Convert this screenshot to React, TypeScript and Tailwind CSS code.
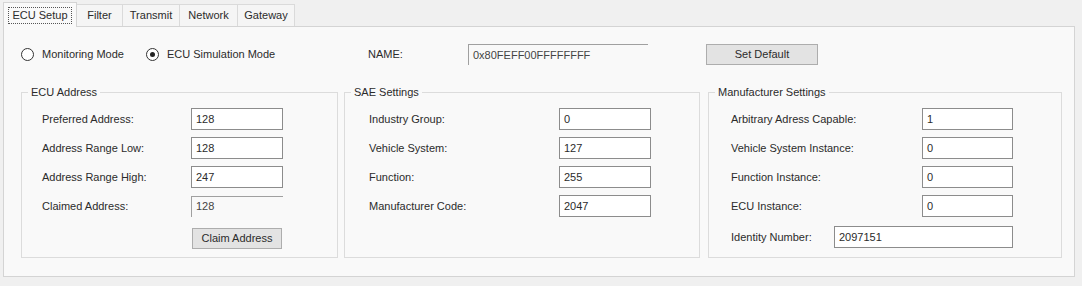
import type { ReactNode } from 'react'

const tabs = ['ECU Setup', 'Filter', 'Transmit', 'Network', 'Gateway']
const tabWidths = [74, 46, 57, 58, 57]

function TextBox({ value, width, readOnly }: { value: string; width: number; readOnly?: boolean }) {
  return (
    <div
      className={
        readOnly
          ? 'h-[21px] border-t border-l border-[#a0a0a0] flex items-center pl-[4px] text-[#444]'
          : 'h-[22px] border border-[#8c8c8c] bg-white flex items-center pl-[4px]'
      }
      style={{ width }}
    >
      {value}
    </div>
  )
}

function Button({ children, width }: { children: ReactNode; width: number }) {
  return (
    <div
      className="h-[21px] border border-[#adadad] bg-[#e3e3e3] flex items-center justify-center"
      style={{ width }}
    >
      {children}
    </div>
  )
}

function Radio({ checked, label }: { checked?: boolean; label: string }) {
  return (
    <div className="flex items-center">
      <span className="w-[13px] h-[13px] rounded-full border border-[#333] bg-white flex items-center justify-center">
        {checked && <span className="w-[5px] h-[5px] rounded-full bg-[#222]" />}
      </span>
      <span className="ml-[8px]">{label}</span>
    </div>
  )
}

function Group({ title, width, padLeft, children }: { title: string; width: number; padLeft: number; children: ReactNode }) {
  return (
    <fieldset
      className="h-[172px] border border-[#dcdcdc] pt-[9px] pr-[8px] pb-[7px]"
      style={{ width, paddingLeft: padLeft }}
    >
      <legend className="px-[3px] leading-[13px]" style={{ marginLeft: 6 - padLeft }}>
        {title}
      </legend>
      {children}
    </fieldset>
  )
}

function Row({ label, value, labelWidth, boxWidth, readOnly }: { label: string; value: string; labelWidth: number; boxWidth: number; readOnly?: boolean }) {
  return (
    <div className="flex items-center h-[22px]">
      <div style={{ width: labelWidth }}>{label}</div>
      <TextBox value={value} width={boxWidth} readOnly={readOnly} />
    </div>
  )
}

export default function App() {
  return (
    <div className="w-[1082px] h-[286px] bg-[#f0f0f0] text-[11px] text-[#2b2b2b] font-['Liberation_Sans',Arial,sans-serif] overflow-hidden">
      {/* tab strip */}
      <div className="h-[26px] flex items-end pl-[3px]">
        {tabs.map((t, i) =>
          i === 0 ? (
            <div
              key={t}
              className="h-[25px] border border-b-0 border-[#d4d4d4] bg-[#f9f9f9] flex items-center justify-center relative z-10 mb-[-1px]"
              style={{ width: tabWidths[i] }}
            >
              <span className="border border-dotted border-[#555] px-[3px] leading-[15px]">{t}</span>
            </div>
          ) : (
            <div
              key={t}
              className="h-[22px] border border-b-0 border-l-0 border-[#dadada] bg-[#f5f5f5] flex items-center justify-center"
              style={{ width: tabWidths[i] }}
            >
              {t}
            </div>
          ),
        )}
      </div>

      {/* tab page */}
      <div className="ml-[3px] w-[1072px] h-[251px] border border-[#d4d4d4] bg-[#f9f9f9] pl-[17px]">
        <div className="mt-[17px] h-[21px] flex items-center">
          <div className="w-[125px]">
            <Radio label="Monitoring Mode" />
          </div>
          <div className="w-[222px]">
            <Radio checked label="ECU Simulation Mode" />
          </div>
          <div className="w-[100px]">NAME:</div>
          <div className="w-[180px] self-start">
            <TextBox value="0x80FEFF00FFFFFFFF" width={180} readOnly />
          </div>
          <div className="ml-[58px]">
            <Button width={112}>Set Default</Button>
          </div>
        </div>

        <div className="mt-[21px] flex">
          <Group title="ECU Address" width={317} padLeft={20}>
            <div className="flex flex-col gap-[7px]">
              <Row label="Preferred Address:" value="128" labelWidth={149} boxWidth={92} />
              <Row label="Address Range Low:" value="128" labelWidth={149} boxWidth={92} />
              <Row label="Address Range High:" value="247" labelWidth={149} boxWidth={92} />
              <Row label="Claimed Address:" value="128" labelWidth={149} boxWidth={92} readOnly />
            </div>
            <div className="mt-[11px] ml-[150px]">
              <Button width={90}>Claim Address</Button>
            </div>
          </Group>

          <div className="ml-[6px]">
            <Group title="SAE Settings" width={356} padLeft={24}>
              <div className="flex flex-col gap-[7px]">
                <Row label="Industry Group:" value="0" labelWidth={190} boxWidth={92} />
                <Row label="Vehicle System:" value="127" labelWidth={190} boxWidth={92} />
                <Row label="Function:" value="255" labelWidth={190} boxWidth={92} />
                <Row label="Manufacturer Code:" value="2047" labelWidth={190} boxWidth={92} />
              </div>
            </Group>
          </div>

          <div className="ml-[8px]">
            <Group title="Manufacturer Settings" width={354} padLeft={22}>
              <div className="flex flex-col gap-[7px]">
                <Row label="Arbitrary Adress Capable:" value="1" labelWidth={191} boxWidth={91} />
                <Row label="Vehicle System Instance:" value="0" labelWidth={191} boxWidth={91} />
                <Row label="Function Instance:" value="0" labelWidth={191} boxWidth={91} />
                <Row label="ECU Instance:" value="0" labelWidth={191} boxWidth={91} />
              </div>
              <div className="mt-[9px]">
                <Row label="Identity Number:" value="2097151" labelWidth={103} boxWidth={179} />
              </div>
            </Group>
          </div>
        </div>
      </div>
    </div>
  )
}
